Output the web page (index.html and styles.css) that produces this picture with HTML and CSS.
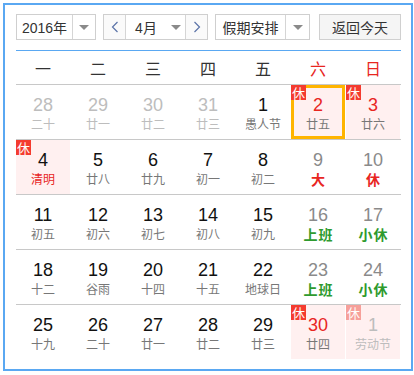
FILE: index.html
```html
<!DOCTYPE html>
<html lang="zh-CN">
<head>
<meta charset="utf-8">
<link rel="stylesheet" href="styles.css">
</head>
<body>
<div class="cal">
  <div class="toolbar">
    <div class="sel sel-year"><span class="sel-text">2016年</span><span class="sel-arrow"><i class="tri"></i></span></div>
    <div class="sel sel-month">
      <span class="nav"><svg width="8" height="12" viewBox="0 0 8 12"><polyline points="6.5,1 1.5,6 6.5,11" fill="none" stroke="#5b73a8" stroke-width="1.2"/></svg></span>
      <span class="sel-text month-text">4月</span>
      <span class="sel-arrow month-arrow"><i class="tri"></i></span>
      <span class="nav nav-next"><svg width="8" height="12" viewBox="0 0 8 12"><polyline points="1.5,1 6.5,6 1.5,11" fill="none" stroke="#5b73a8" stroke-width="1.2"/></svg></span>
    </div>
    <div class="sel sel-holiday"><span class="sel-text">假期安排</span><span class="sel-arrow"><i class="tri"></i></span></div>
    <div class="btn-today">返回今天</div>
  </div>
  <div class="week">
    <span>一</span><span>二</span><span>三</span><span>四</span><span>五</span><span class="we">六</span><span class="we">日</span>
  </div>
  <div class="row">
    <div class="cell other"><b>28</b><em>二十</em></div>
    <div class="cell other"><b>29</b><em>廿一</em></div>
    <div class="cell other"><b>30</b><em>廿二</em></div>
    <div class="cell other"><b>31</b><em>廿三</em></div>
    <div class="cell"><b>1</b><em>愚人节</em></div>
    <div class="cell rest today"><span class="badge">休</span><b class="red">2</b><em>廿五</em></div>
    <div class="cell rest"><span class="badge">休</span><b class="red">3</b><em>廿六</em></div>
  </div>
  <div class="row">
    <div class="cell rest"><span class="badge">休</span><b>4</b><em class="red">清明</em></div>
    <div class="cell"><b>5</b><em>廿八</em></div>
    <div class="cell"><b>6</b><em>廿九</em></div>
    <div class="cell"><b>7</b><em>初一</em></div>
    <div class="cell"><b>8</b><em>初二</em></div>
    <div class="cell"><b class="gray">9</b><em class="tag red">大</em></div>
    <div class="cell"><b class="gray">10</b><em class="tag red">休</em></div>
  </div>
  <div class="row">
    <div class="cell"><b>11</b><em>初五</em></div>
    <div class="cell"><b>12</b><em>初六</em></div>
    <div class="cell"><b>13</b><em>初七</em></div>
    <div class="cell"><b>14</b><em>初八</em></div>
    <div class="cell"><b>15</b><em>初九</em></div>
    <div class="cell"><b class="gray">16</b><em class="tag green">上班</em></div>
    <div class="cell"><b class="gray">17</b><em class="tag green">小休</em></div>
  </div>
  <div class="row">
    <div class="cell"><b>18</b><em>十二</em></div>
    <div class="cell"><b>19</b><em>谷雨</em></div>
    <div class="cell"><b>20</b><em>十四</em></div>
    <div class="cell"><b>21</b><em>十五</em></div>
    <div class="cell"><b>22</b><em>地球日</em></div>
    <div class="cell"><b class="gray">23</b><em class="tag green">上班</em></div>
    <div class="cell"><b class="gray">24</b><em class="tag green">小休</em></div>
  </div>
  <div class="row last">
    <div class="cell"><b>25</b><em>十九</em></div>
    <div class="cell"><b>26</b><em>二十</em></div>
    <div class="cell"><b>27</b><em>廿一</em></div>
    <div class="cell"><b>28</b><em>廿二</em></div>
    <div class="cell"><b>29</b><em>廿三</em></div>
    <div class="cell rest"><span class="badge">休</span><b class="red">30</b><em>廿四</em></div>
    <div class="cell rest other"><span class="badge faded">休</span><b>1</b><em>劳动节</em></div>
  </div>
</div>
</body>
</html>
```

FILE: styles.css
```css
* { box-sizing: border-box; }
body {
  margin: 0;
  background: #fff;
  font-family: "Liberation Sans", Arial, "Noto Sans CJK SC", sans-serif;
}
.cal {
  margin: 3px;
  width: 410px;
  height: 368px;
  border: 2px solid #5aa8f2;
  padding: 9px 10px 10px 11px;
}
.toolbar {
  display: flex;
  height: 26px;
}
.sel {
  display: flex;
  border: 1px solid #cfcfcf;
  height: 26px;
  background: #fff;
  color: #333;
  font-size: 14px;
  font-family: "Liberation Sans", Arial, "Noto Sans CJK SC", sans-serif;
}
.sel-text {
  display: flex;
  align-items: center;
  justify-content: center;
  height: 24px;
}
.sel-arrow {
  display: flex;
  align-items: center;
  justify-content: center;
  height: 24px;
  border-left: 1px solid #d5d5d5;
}
.tri {
  width: 0;
  height: 0;
  border-left: 5px solid transparent;
  border-right: 5px solid transparent;
  border-top: 5px solid #8a8a8a;
  margin-top: 1px;
}
.sel-year { width: 80px; }
.sel-year .sel-text { width: 55px; }
.sel-year .sel-arrow { width: 23px; }
.sel-month { width: 105px; margin-left: 7px; }
.nav {
  width: 22px;
  height: 24px;
  display: flex;
  align-items: center;
  justify-content: center;
  background: #fafafa;
  border-right: 1px solid #d5d5d5;
}
.nav-next { border-right: 0; border-left: 1px solid #d5d5d5; width: 22px; }
.month-text { width: 40px; }
.month-arrow { border-left: 0; width: 19px; }
.sel-holiday { width: 95px; margin-left: 7px; }
.sel-holiday .sel-text { width: 69px; }
.sel-holiday .sel-arrow { width: 24px; }
.btn-today {
  margin-left: 9px;
  width: 82px;
  height: 26px;
  border: 1px solid #d0d0d0;
  background: #f5f5f5;
  color: #333;
  font-size: 14px;
  display: flex;
  align-items: center;
  justify-content: center;
}
.week {
  margin-top: 10px;
  width: 385px;
  height: 35px;
  border-top: 1px solid #5aa8f2;
  border-bottom: 1px solid #c8c8c8;
  display: grid;
  grid-template-columns: repeat(7, 55px);
  align-items: center;
  font-family: "Noto Sans CJK SC", sans-serif;
  font-size: 16px;
  color: #333;
}
.week span { text-align: center; margin-left: -1px; }
.week .we { color: #e8261f; }
.row {
  width: 385px;
  height: 55px;
  border-bottom: 1px solid #c8c8c8;
  display: grid;
  grid-template-columns: repeat(7, 54px);
  column-gap: 1px;
}
.row.last { border-bottom: 0; height: 54px; }
.cell {
  position: relative;
  height: 54px;
  display: flex;
  flex-direction: column;
  align-items: center;
}
.cell b {
  font-weight: normal;
  font-family: "Liberation Sans", Arial, sans-serif;
  font-size: 18px;
  line-height: 20px;
  margin-top: 10px;
  color: #111;
}
.cell em {
  font-style: normal;
  font-family: "Noto Sans CJK SC", sans-serif;
  font-size: 12px;
  line-height: 16px;
  margin-top: 1px;
  color: #777;
}
.cell em.tag { font-size: 14px; font-weight: bold; letter-spacing: 1px; margin-right: -1px; }
.cell.other b, .cell.other em { color: #bdbdbd; }
.cell b.gray { color: #8a8a8a; }
.cell .red { color: #e8261f; }
.cell em.red { color: #e8261f; }
.cell .green { color: #2e9a2e; }
.cell.rest { background: #fff0f0; }
.cell.today { border: 3px solid #ffb400; }
.cell.today b { margin-top: 7px; }
.cell.today .badge { left: -3px; top: -3px; }
.badge {
  position: absolute;
  left: 0;
  top: 0;
  width: 15px;
  height: 15px;
  background: #f43b2f;
  color: #fff;
  font-family: "Noto Sans CJK SC", sans-serif;
  font-size: 13px;
  line-height: 15px;
  text-align: center;
}
.badge.faded { background: #f6a09a; }
```
